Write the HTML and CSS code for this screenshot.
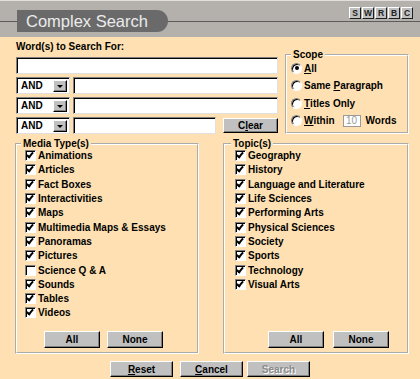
FILE: index.html
```html
<!DOCTYPE html>
<html lang="en">
<head>
    <meta charset="UTF-8">
    <title>Complex Search</title>
    <link rel="stylesheet" href="styles.css">
</head>
<body>

    <div class="header">
        <div class="title-tab">Complex Search</div>
        <div class="nav-buttons">
            <span class="nav-btn">S</span>
            <span class="nav-btn">W</span>
            <span class="nav-btn">R</span>
            <span class="nav-btn">B</span>
            <span class="nav-btn">C</span>
        </div>
    </div>

    <div class="content">
        <div class="top">
            <div class="words">
                <div class="label">Word(s) to Search For:</div>
                <div class="field"></div>
                <div class="row">
                    <div class="select">AND<span class="drop"><span class="arrow"></span></span></div>
                    <div class="field grow"></div>
                </div>
                <div class="row">
                    <div class="select">AND<span class="drop"><span class="arrow"></span></span></div>
                    <div class="field grow"></div>
                </div>
                <div class="row">
                    <div class="select">AND<span class="drop"><span class="arrow"></span></span></div>
                    <div class="field short"></div>
                    <div class="btn clear">C<u>l</u>ear</div>
                </div>
            </div>

            <fieldset class="scope">
                <legend>Scope</legend>
                <div class="radios">
                    <div class="radio-row"><span class="radio on"></span><u>A</u>ll</div>
                    <div class="radio-row"><span class="radio"></span>Same&nbsp;<u>P</u>aragraph</div>
                    <div class="radio-row"><span class="radio"></span><u>T</u>itles Only</div>
                    <div class="radio-row"><span class="radio"></span><u>W</u>ithin <span class="num">10</span> Words</div>
                </div>
            </fieldset>
        </div>

        <div class="lists">
            <fieldset class="group media">
                <legend>Media Type(s)</legend>
                <div class="items">
                    <div class="item"><span class="check on"></span>Animations</div>
                    <div class="item"><span class="check on"></span>Articles</div>
                    <div class="item"><span class="check on"></span>Fact Boxes</div>
                    <div class="item"><span class="check on"></span>Interactivities</div>
                    <div class="item"><span class="check on"></span>Maps</div>
                    <div class="item"><span class="check on"></span>Multimedia Maps &amp; Essays</div>
                    <div class="item"><span class="check on"></span>Panoramas</div>
                    <div class="item"><span class="check on"></span>Pictures</div>
                    <div class="item"><span class="check"></span>Science Q &amp; A</div>
                    <div class="item"><span class="check on"></span>Sounds</div>
                    <div class="item"><span class="check on"></span>Tables</div>
                    <div class="item"><span class="check on"></span>Videos</div>
                </div>
                <div class="group-buttons">
                    <div class="btn small">All</div>
                    <div class="btn small">None</div>
                </div>
            </fieldset>

            <fieldset class="group topics">
                <legend>Topic(s)</legend>
                <div class="items">
                    <div class="item"><span class="check on"></span>Geography</div>
                    <div class="item"><span class="check on"></span>History</div>
                    <div class="item"><span class="check on"></span>Language and Literature</div>
                    <div class="item"><span class="check on"></span>Life Sciences</div>
                    <div class="item"><span class="check on"></span>Performing Arts</div>
                    <div class="item"><span class="check on"></span>Physical Sciences</div>
                    <div class="item"><span class="check on"></span>Society</div>
                    <div class="item"><span class="check on"></span>Sports</div>
                    <div class="item"><span class="check on"></span>Technology</div>
                    <div class="item"><span class="check on"></span>Visual Arts</div>
                </div>
                <div class="group-buttons">
                    <div class="btn small">All</div>
                    <div class="btn small">None</div>
                </div>
            </fieldset>
        </div>

        <div class="actions">
            <div class="btn wide"><u>R</u>eset</div>
            <div class="btn wide"><u>C</u>ancel</div>
            <div class="btn wide disabled">Search</div>
        </div>
    </div>

</body>
</html>
```

FILE: styles.css
```css
body {
    margin: 0;
    width: 420px;
    height: 379px;
    overflow: hidden;
    background-color: #ffe0b2;
    font-family: "Liberation Sans", Arial, sans-serif;
    font-size: 10px;
    font-weight: bold;
    color: #000;
}
.header {
    height: 37px;
    box-sizing: border-box;
    display: flex;
    justify-content: space-between;
    align-items: flex-start;
    border-top: 1px solid #e2dedb;
    background-color: #b4b0ab;
    background-image: linear-gradient(to bottom, transparent 20px, #5c5c5c 20px, #5c5c5c 21px, transparent 21px);
}
.title-tab {
    margin: 9px 0 0 17px;
    height: 22px;
    line-height: 22px;
    padding: 0 20px 0 9px;
    background-color: #6a6a6a;
    border-radius: 0 11px 11px 0;
    color: #ececec;
    font-size: 16.5px;
    font-weight: normal;
}
.nav-buttons {
    display: flex;
    gap: 1px;
    margin: 6px 7px 0 0;
}
.nav-btn {
    width: 12px;
    height: 12px;
    box-sizing: border-box;
    display: flex;
    justify-content: center;
    align-items: center;
    background-color: #c0c0c0;
    border: 1px solid;
    border-color: #fff #202020 #202020 #fff;
    font-size: 8.5px;
    color: #222;
}
.content {
    padding: 0 11px 0 16px;
    border-left: 2px solid #dcd8d4;
    margin-left: -2px;
}
.top {
    display: grid;
    grid-template-columns: 262px 124px;
    gap: 7px;
    align-items: start;
}
.words {
    display: flex;
    flex-direction: column;
    gap: 3px;
    padding-top: 4px;
}
.label {
    line-height: 12px;
    margin-bottom: 1px;
}
.field {
    height: 17px;
    box-sizing: border-box;
    background-color: #fff;
    border: 1px solid;
    border-color: #808080 #e0e0e0 #e0e0e0 #808080;
    box-shadow: inset 1px 1px #000;
}
.row {
    display: flex;
    align-items: center;
    gap: 3px;
}
.grow {
    flex: 1;
}
.short {
    width: 143px;
}
.select {
    width: 54px;
    height: 17px;
    box-sizing: border-box;
    display: flex;
    justify-content: space-between;
    align-items: center;
    padding: 0 2px 0 4px;
    background-color: #fff;
    border: 1px solid;
    border-color: #808080 #e0e0e0 #e0e0e0 #808080;
    box-shadow: inset 1px 1px #000;
}
.drop {
    width: 14px;
    height: 12px;
    margin-top: 1px;
    box-sizing: border-box;
    display: flex;
    justify-content: center;
    align-items: center;
    background-color: #c0c0c0;
    border: 1px solid;
    border-color: #fff #000 #000 #fff;
    box-shadow: inset -1px -1px #808080;
}
.arrow {
    width: 0;
    height: 0;
    border-left: 3px solid transparent;
    border-right: 3px solid transparent;
    border-top: 3px solid #000;
}
.btn {
    box-sizing: border-box;
    display: flex;
    justify-content: center;
    align-items: center;
    background-color: #c0c0c0;
    border: 1px solid;
    border-color: #fff #000 #000 #fff;
    box-shadow: inset -1px -1px #808080;
}
.clear {
    width: 55px;
    height: 15px;
    margin-left: 4px;
}
fieldset {
    margin: 0;
    border: 2px groove #fff;
}
legend {
    padding: 0 2px;
    line-height: 12px;
}
.scope {
    margin-top: 12px;
    padding: 0 4px 2px 4px;
}
.radios {
    margin-top: -1.5px;
}
.radio-row {
    height: 17.5px;
    display: flex;
    align-items: center;
    white-space: nowrap;
}
.radio {
    width: 11px;
    height: 11px;
    box-sizing: border-box;
    margin-right: 2px;
    border-radius: 50%;
    background-color: #fff;
    border: 1px solid;
    border-color: #808080 #fff #fff #808080;
    box-shadow: inset 1px 1px #000;
    display: flex;
    justify-content: center;
    align-items: center;
}
.radio.on::after {
    content: "";
    width: 4px;
    height: 4px;
    border-radius: 50%;
    background-color: #000;
}
.num {
    width: 18px;
    height: 12px;
    box-sizing: border-box;
    margin: 0 5px 0 8px;
    display: flex;
    justify-content: center;
    align-items: center;
    background-color: #fff;
    border: 1px solid #9a9a9a;
    color: #9a9a9a;
    font-weight: normal;
}
.lists {
    display: grid;
    grid-template-columns: 184px 186px;
    gap: 24px;
    margin: 3.5px 0 0 -1px;
}
.group {
    padding: 0 4px 4px 8px;
}
.group legend {
    margin-left: -4px;
}
.topics {
    padding-left: 10px;
}
.items {
    height: 172px;
    margin-top: -1px;
}
.item {
    height: 14.3px;
    display: flex;
    align-items: center;
    white-space: nowrap;
}
.check {
    width: 11px;
    height: 11px;
    box-sizing: border-box;
    margin-right: 2px;
    background-color: #fff;
    border: 1px solid;
    border-color: #808080 #fff #fff #808080;
    box-shadow: inset 1px 1px #000;
    position: relative;
}
.check.on::after {
    content: "";
    position: absolute;
    left: 2px;
    top: 0px;
    width: 2px;
    height: 5px;
    border: solid #000;
    border-width: 0 2px 2px 0;
    transform: rotate(40deg);
}
.group-buttons {
    display: flex;
    gap: 7px;
    margin-top: 10px;
    padding-left: 19px;
}
.topics .group-buttons {
    padding-left: 33px;
    gap: 9px;
}
.small {
    width: 56px;
    height: 17px;
}
.actions {
    display: flex;
    gap: 7px;
    margin-top: 7.5px;
    padding-left: 94px;
}
.wide {
    width: 63px;
    height: 16px;
}
.wide + .disabled {
    margin-left: -3px;
}
.disabled {
    color: #8a8a8a;
    text-shadow: 1px 1px #fff;
}
```
